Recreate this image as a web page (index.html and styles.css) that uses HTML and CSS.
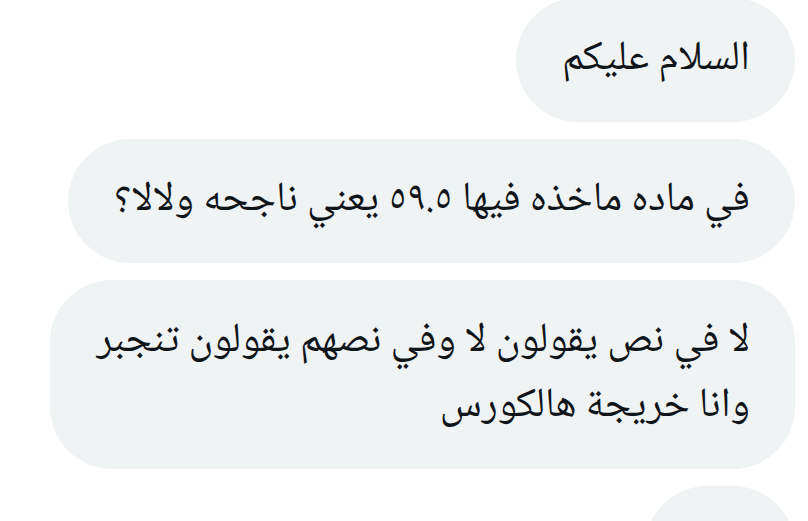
FILE: index.html
```html
<!DOCTYPE html>
<html lang="ar">
<head>
    <meta charset="UTF-8">
    <meta name="viewport" content="width=device-width, initial-scale=1.0">
    <title>messages</title>
    <link rel="stylesheet" href="styles.css">
</head>
<body>
    <div class="chat">
        <div class="bubble">السلام عليكم</div>
        <div class="bubble">في ماده ماخذه فيها ٥٩.٥ يعني ناجحه ولالا؟</div>
        <div class="bubble">لا في نص يقولون لا وفي نصهم يقولون تنجبر<br>وانا خريجة هالكورس</div>
        <div class="bubble short">&nbsp;</div>
    </div>
</body>
</html>
```

FILE: styles.css
```css
*{
    margin: 0;
    padding: 0;
    box-sizing: border-box;
}
body{
    background: #fff;
    font-family: "Noto Naskh Arabic", "Noto Sans Arabic", "Droid Arabic Naskh", "DejaVu Sans", sans-serif;
    overflow: hidden;
}
.chat{
    display: flex;
    flex-direction: column;
    align-items: flex-end;
    gap: 17px;
    margin-top: -2px;
    padding: 0 13px 0 0;
}
.bubble{
    direction: rtl;
    background: #eff3f4;
    color: #0f1419;
    font-size: 41.5px;
    line-height: 65px;
    padding: 30px 45px 29px 46px;
    border-radius: 62px;
    text-align: right;
}
.short{
    width: 150px;
}
```
